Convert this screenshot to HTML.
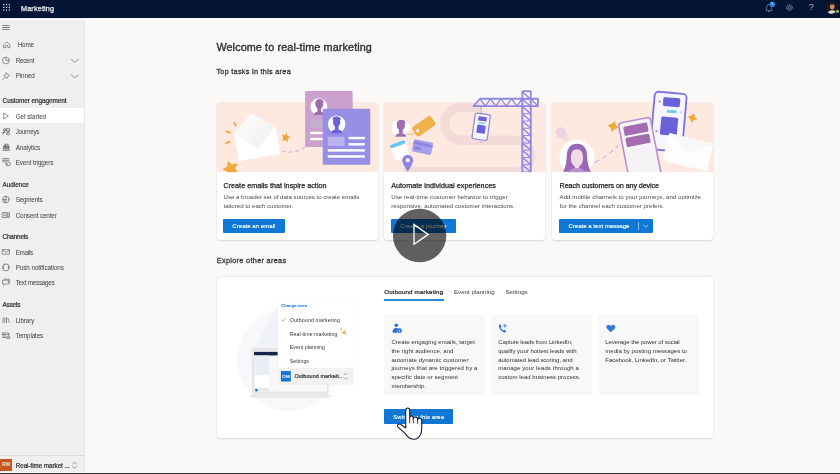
<!DOCTYPE html>
<html lang="en"><head><meta charset="utf-8"><title>Marketing</title>
<style>
html,body{margin:0;padding:0;}
body{width:840px;height:474px;overflow:hidden;position:relative;background:#faf9f8;font-family:"Liberation Sans",sans-serif;}
.abs{position:absolute;}
.t{position:absolute;white-space:nowrap;display:block;}
#hdr{left:0;top:0;width:840px;height:18.2px;background:#031434;}
#side{left:0;top:18px;width:83.7px;height:454px;background:#efefef;border-right:1.2px solid #e6e6e6;}
#sel{left:0;top:107.9px;width:83.7px;height:15.2px;background:#fff;}
#foot{left:0;top:472.7px;width:840px;height:1.3px;background:#383838;}
#sfl{left:0;top:455.2px;width:84.2px;height:0.6px;background:#dddcdb;}
#rm{left:0;top:458.5px;width:12px;height:12.6px;background:#c2571f;}
.card{background:#fff;border-radius:3px;box-shadow:0 0.7px 2px rgba(0,0,0,.13),0 0 1.2px rgba(0,0,0,.12);}
.img{background:#fde9df;border-radius:3px 3px 0 0;}
.btn{background:#0f78d4;border-radius:0.9px;}
.sub{background:#f8f8f8;border-radius:2.8px;}
#blur{filter:blur(0.35px);}
</style></head>
<body>
<div id="blur">
<div class="abs" id="hdr"></div>
<div class="abs" id="side"></div>
<div class="abs" id="sel"></div>
<div class="abs" style="left:0;top:18.7px;width:840px;height:0.9px;background:rgba(255,255,255,.75);"></div>
<div class="abs" id="sfl"></div>
<div class="abs" id="rm"></div>

<!-- task cards -->
<div class="abs card" style="left:216.6px;top:103.2px;width:161px;height:137px;"></div>
<div class="abs card" style="left:384.2px;top:103.2px;width:161px;height:137px;"></div>
<div class="abs card" style="left:551.9px;top:103.2px;width:161px;height:137px;"></div>
<div class="abs img" style="left:216.6px;top:103.2px;width:161px;height:69px;"></div>
<div class="abs img" style="left:384.2px;top:103.2px;width:161px;height:69px;"></div>
<div class="abs img" style="left:551.9px;top:103.2px;width:161px;height:69px;"></div>
<div class="abs btn" style="left:223.3px;top:218.9px;width:61.6px;height:14.2px;"></div>
<div class="abs btn" style="left:391px;top:218.9px;width:64.8px;height:14.2px;"></div>
<div class="abs btn" style="left:559.3px;top:218.9px;width:93.5px;height:14.2px;"></div>
<div class="abs" style="left:638.4px;top:222.4px;width:0.5px;height:7.2px;background:#7fb8ea;"></div>

<!-- explore card -->
<div class="abs card" style="left:216.6px;top:276.7px;width:496.3px;height:160.9px;"></div>
<div class="abs" style="left:384.2px;top:299.3px;width:59.6px;height:1.3px;background:#2b88d8;"></div>
<div class="abs sub" style="left:383.9px;top:315.2px;width:100.7px;height:80px;"></div>
<div class="abs sub" style="left:491.1px;top:315.2px;width:100.7px;height:80px;"></div>
<div class="abs sub" style="left:598.3px;top:315.2px;width:100.7px;height:80px;"></div>
<div class="abs btn" style="left:384px;top:409.3px;width:69.4px;height:14.4px;"></div>

<!--ART1-->
<svg class="abs" style="left:0;top:0;" width="840" height="474" viewBox="0 0 840 474">
<defs>
<clipPath id="c1"><rect x="216.6" y="80" width="161" height="92.2"/></clipPath>
<clipPath id="c2"><rect x="384.2" y="80" width="170" height="92.2"/></clipPath>
<clipPath id="c2r"><rect x="20" y="90" width="800" height="341"/></clipPath>
<clipPath id="c3"><rect x="551.9" y="80" width="161" height="92.2"/></clipPath>
<linearGradient id="envg" x1="0" y1="0" x2="1" y2="1"><stop offset="0" stop-color="#ffffff"/><stop offset="1" stop-color="#eeeeee"/></linearGradient>
</defs>

<!-- CARD 1 art : zoom coords origin (215,85) scale 1/4.94 -->
<g clip-path="url(#c1)"><g transform="translate(215,85) scale(0.20243)">
  <!-- back pink card -->
  <rect x="445" y="30" width="235" height="276" rx="5" fill="#cba0cf"/>
  <circle cx="513" cy="108" r="42" fill="#fff"/>
  <g fill="#a06bb0"><ellipse cx="515" cy="96" rx="19" ry="22"/><rect x="506" y="110" width="18" height="24"/><path d="M489 148 q0-16 26-17 q26 1 26 17z"/><path d="M494 92 q4-26 30-22 q14 4 12 20 q-10-12-42 2z"/></g>
  <rect x="470" y="170" width="80" height="42" rx="3" fill="#c4b0cf"/>
  <rect x="470" y="231" width="80" height="12" fill="#fff"/>
  <rect x="470" y="261" width="80" height="12" fill="#fff"/>
  <!-- dashed connector -->
  <path d="M330 325 Q390 345 445 305" fill="none" stroke="#cdb9de" stroke-width="6" stroke-dasharray="20 14"/>
  <!-- front purple card -->
  <rect x="532" y="117" width="235" height="277" rx="5" fill="#978ee6"/>
  <circle cx="601" cy="194" r="43" fill="#fff"/>
  <g fill="#6c61dd"><ellipse cx="601" cy="183" rx="18" ry="22"/><rect x="592" y="198" width="18" height="24"/><path d="M574 238 q0-17 27-18 q27 1 27 18z"/><path d="M581 172 q0-18 12-14 q8-8 16 0 q12-2 12 14z"/></g>
  <rect x="557" y="256" width="83" height="45" rx="4" fill="#bab3ef"/>
  <rect x="660" y="256" width="80" height="12" fill="#fff"/>
  <rect x="660" y="287" width="80" height="12" fill="#fff"/>
  <rect x="557" y="317" width="183" height="12" fill="#fff"/>
  <rect x="557" y="347" width="183" height="12" fill="#fff"/>
  <!-- envelope -->
  <path d="M95 240 L300 208 L320 340 L118 376 Z" fill="#ffffff"/>
  <path d="M95 240 L180 140 L300 208 L212 316 Z" fill="url(#envg)"/>
  <path d="M95 240 L212 316 L300 208 L320 340 L118 376 Z" fill="#ffffff"/>
  <!-- stars -->
  <path d="M350 236 l7 14 16 3 -12 11 3 16 -14-8 -14 8 3-16 -12-11 16-3z" fill="#f2a93b" transform="rotate(12 350 258)"/>
  <path d="M72 372 l13 25 28 4 -20 20 5 28 -26-14 -26 14 5-28 -20-20 28-4z" fill="#f2a93b" transform="rotate(-22 72 408) translate(4,2)"/>
  <!-- ticks -->
  <path d="M56 229 l18 6 M95 186 l7 16 M55 287 l17-7" stroke="#f2a93b" stroke-width="9" stroke-linecap="round" fill="none"/>
</g></g>

<!-- CARD 2 art : origin (380,85) -->
<g clip-path="url(#c2)"><g transform="translate(380,85) scale(0.20243)">
  <!-- road -->
  <path d="M500 110 H402 A81 81 0 0 0 402 272 H667 A78 78 0 0 1 667 428 H115" fill="none" stroke="#f3dbd8" stroke-width="46" clip-path="url(#c2r)"/>
  <!-- c2 person -->
  <circle cx="103" cy="213" r="45" fill="#fff"/>
  <g fill="#a06bb0"><ellipse cx="103" cy="201" rx="20" ry="23"/><rect x="94" y="216" width="18" height="24"/><path d="M76 256 q0-17 27-18 q27 1 27 18z"/><path d="M82 196 q2-28 30-24 q16 4 12 22 q-10-12-42 2z"/></g>
  <!-- tag -->
  <g transform="rotate(-35 215 203)"><rect x="160" y="176" width="112" height="56" rx="12" fill="#f0b04a"/><circle cx="178" cy="204" r="9" fill="#fde9df"/></g>
  <path d="M130 238 q20 14 52-4" fill="none" stroke="#f0b04a" stroke-width="4"/>
  <!-- calendar -->
  <g transform="rotate(-20 98 322)"><rect x="60" y="282" width="76" height="82" rx="6" fill="#fff"/><rect x="60" y="282" width="76" height="18" rx="6" fill="#6cc5ea"/></g>
  <!-- credit card -->
  <g transform="rotate(12 210 308)"><rect x="162" y="276" width="96" height="62" rx="6" fill="#a79dec"/><rect x="162" y="288" width="96" height="12" fill="#8c82e0"/><rect x="172" y="310" width="30" height="14" fill="#8c82e0"/></g>
  <!-- pin -->
  <path d="M137 345 a27 27 0 0 1 27 27 q0 18-27 56 q-27-38-27-56 a27 27 0 0 1 27-27z" fill="#8f86e0"/><circle cx="137" cy="372" r="10" fill="#fff"/>
  <!-- crane tower -->
  <g stroke="#9088e2" fill="none">
   <path d="M703 30 V432 M745 30 V432" stroke-width="9"/>
   <path d="M703 30 H745" stroke-width="9"/>
   <path d="M703 34 L745 70 M703 70 L745 106 M703 106 L745 142 M703 142 L745 178 M703 178 L745 214 M703 214 L745 250 M703 250 L745 286 M703 286 L745 322 M703 322 L745 358 M703 358 L745 394 M703 394 L745 430" stroke-width="7"/>
   <path d="M703 70 H745 M703 106 H745 M703 142 H745 M703 178 H745 M703 214 H745 M703 250 H745 M703 286 H745 M703 322 H745 M703 358 H745 M703 394 H745 M703 430 H745" stroke-width="5"/>
   <!-- jib -->
   <path d="M462 104 H780 V68 H494 Z" stroke-width="9" stroke-linejoin="round"/>
   <path d="M494 68 L520 104 L546 68 L572 104 L598 68 L624 104 L650 68 L676 104 L703 68 M745 68 L780 104" stroke-width="6.5"/>
   <path d="M500 104 V142" stroke-width="3"/>
  </g>
  <!-- hanging phone -->
  <g transform="rotate(8 500 205)"><rect x="462" y="142" width="76" height="128" rx="10" fill="#f6f5fd" stroke="#8f86e0" stroke-width="6"/>
   <rect x="480" y="156" width="42" height="22" rx="3" fill="#6c61dd"/><rect x="486" y="184" width="30" height="7" rx="3" fill="#6fd0e6"/><rect x="480" y="198" width="42" height="40" rx="3" fill="#6c61dd"/></g>
  <path d="M484 270 l16 22 16-18z" fill="#e6c6dc"/>
</g></g>

<!-- CARD 3 art : origin (548,85) -->
<g clip-path="url(#c3)"><g transform="translate(548,85) scale(0.20243)">
  <!-- fingerprint blobs -->
  <circle cx="64" cy="235" r="26" fill="#dcc3e2" opacity=".55"/><circle cx="86" cy="260" r="17" fill="#e9d3e4" opacity=".6"/>
  <!-- dashed -->
  <path d="M230 382 Q300 350 345 300" fill="none" stroke="#cdb9de" stroke-width="6" stroke-dasharray="26 16"/>
  <!-- blue phone (back) -->
  <g transform="translate(-8,0) rotate(5 603 180)"><rect x="524" y="38" width="158" height="286" rx="20" fill="#f7f6fd" stroke="#7b73e2" stroke-width="9"/>
   <rect x="568" y="62" width="84" height="44" rx="8" fill="#6a62d8"/>
   <rect x="590" y="122" width="50" height="15" rx="7" fill="#6fd0e6"/>
   <rect x="566" y="158" width="84" height="90" rx="8" fill="#6a62d8"/>
   <circle cx="552" cy="86" r="6" fill="#a7a0ea"/><circle cx="548" cy="232" r="6" fill="#a7a0ea"/><circle cx="660" cy="130" r="5" fill="#c9c4f3"/>
  </g>
  <!-- stars -->
  <path d="M328 176 q4 20 26 27 q-22 6-26 27 q-4-21-26-27 q22-7 26-27z" fill="#f2a93b" transform="translate(-5,2) rotate(15 328 203) translate(328,203) scale(1.18) translate(-328,-203)"/>
  <path d="M722 140 q3 17 22 23 q-19 5-22 23 q-3-18-22-23 q19-6 22-23z" fill="#f2a93b" transform="translate(-8,0) rotate(15 722 163) translate(722,163) scale(1.2) translate(-722,-163)"/>
  <!-- mauve phone (front) -->
  <g transform="rotate(-11 450 310)"><rect x="372" y="172" width="160" height="300" rx="16" fill="#f5f3f5" stroke="#bb91d1" stroke-width="8"/>
   <rect x="392" y="194" width="120" height="46" rx="6" fill="#a36bb0"/>
   <rect x="392" y="250" width="120" height="46" rx="6" fill="#a36bb0"/></g>
  <!-- envelope -->
  <g transform="rotate(14 690 335)"><rect x="578" y="262" width="226" height="140" rx="4" fill="#fdfdfd"/><path d="M578 262 L691 340 L804 262z" fill="#f8f8f8"/></g>
  <!-- woman -->
  <circle cx="143" cy="357" r="86" fill="#fff"/>
  <path d="M143 290 q-48 0-50 60 q-2 50-18 78 h136 q-16-28-18-78 q-2-60-50-60z" fill="#9a66b5"/>
  <path d="M143 318 q-30 0-30 40 q0 36 20 44 v24 h20 v-24 q20-8 20-44 q0-40-30-40z" fill="#f1dbe6"/>
  <path d="M95 440 q10-30 48-30 q38 0 48 30z" fill="#b98fd0"/>
</g></g>
</svg>
<svg class="abs" style="left:0;top:0;" width="840" height="474" viewBox="0 0 840 474">
<defs>
<filter id="ds" x="-20%" y="-20%" width="140%" height="140%"><feGaussianBlur in="SourceAlpha" stdDeviation="2.2"/><feOffset dy="1.2"/><feComponentTransfer><feFuncA type="linear" slope="0.3"/></feComponentTransfer><feMerge><feMergeNode/><feMergeNode in="SourceGraphic"/></feMerge></filter>
</defs>
<!-- header icons -->
<g fill="#cfd4e0">
 <rect x="3.1" y="3.9" width="1.3" height="1.3"/><rect x="5.9" y="3.9" width="1.3" height="1.3"/><rect x="8.7" y="3.9" width="1.3" height="1.3"/>
 <rect x="3.1" y="6.7" width="1.3" height="1.3"/><rect x="5.9" y="6.7" width="1.3" height="1.3"/><rect x="8.7" y="6.7" width="1.3" height="1.3"/>
 <rect x="3.1" y="9.5" width="1.3" height="1.3"/><rect x="5.9" y="9.5" width="1.3" height="1.3"/><rect x="8.7" y="9.5" width="1.3" height="1.3"/>
</g>
<!-- bell -->
<path d="M766.6 9.6 v-2.6 a2.4 2.4 0 0 1 4.8 0 v2.6 l0.7 0.8 h-6.2z M768.2 11 a0.9 0.9 0 0 0 1.8 0" fill="none" stroke="#9aa3b8" stroke-width="0.6"/>
<circle cx="772.3" cy="4.2" r="2.8" fill="#1a7fe0"/>
<!-- gear -->
<circle cx="789.5" cy="7.6" r="2.7" fill="none" stroke="#aab2c4" stroke-width="1" stroke-dasharray="1.1 0.6"/><circle cx="789.5" cy="7.6" r="1.1" fill="none" stroke="#aab2c4" stroke-width="0.6"/>
<!-- user photo -->
<clipPath id="avc"><circle cx="831.2" cy="7.7" r="6.2"/></clipPath>
<circle cx="831.2" cy="7.7" r="6.2" fill="#1b1b1e"/>
<g clip-path="url(#avc)"><ellipse cx="832.2" cy="6.6" rx="2.3" ry="3" fill="#c98d5f"/><path d="M827.500 14 q.5-3.800 4.600-3.800 q4.200 0 4.800 3.800z" fill="#d8d4cf"/><path d="M829.6 5 q2.400-3.200 5.400-.4 q-2.600-.6-5.400 .4z" fill="#2a1c14"/></g>
<circle cx="837.5" cy="11.4" r="1.6" fill="#7fba2c"/>

<!-- sidebar icons -->
<g fill="none" stroke="#555351" stroke-width="0.6" stroke-linecap="round" stroke-linejoin="round">
 <path d="M2.6 25.6 h6.8 M2.6 27.5 h6.8 M2.6 29.4 h6.8" stroke-width="0.7"/>
 <!-- home -->
 <path d="M3.8 44.6 L6.8 41.9 L9.8 44.6 V47.7 H7.9 V45.6 H5.7 V47.7 H3.8 Z"/>
 <!-- recent -->
 <circle cx="5.9" cy="60.5" r="3.4"/><path d="M5.9 58.4 V60.6 H7.6"/>
 <!-- pinned -->
 <path d="M6.4 72.9 L9.3 75.8 L8 76.2 L6.9 78.6 L3.9 75.6 L6.1 74.4 Z M5.3 77.1 L2.9 79.5"/>
 <!-- chevrons -->
 <path d="M71.4 59.4 L74.9 62.4 L78.4 59.4 M71.4 74.9 L74.9 77.9 L78.4 74.9" stroke-width="0.6"/>
 <!-- get started -->
 <path d="M4.1 113.3 L8.4 116.1 L4.1 118.9 Z"/>
 <!-- journeys -->
 <path d="M3 134.4 L4.6 130.6 M3.600 129.700 a1.100 1.100 0 1 0 2.200 0 a1.100 1.100 0 1 0 -2.200 0 M2.800 132.400 h2.400 M6.700 128.700 h2.800 v2.400 h-2.800z M8.100 131.100 v1.100 M6.800 133.600 a1.300 1.300 0 1 0 2.600 0 a1.300 1.300 0 1 0 -2.600 0" stroke-width="0.7"/>
 <!-- analytics -->
 <path d="M3.100 150.300 h6.600 M3.900 149.200 v-2.800 M5.400 149.200 v-4.600 M6.900 149.200 v-3.800 M8.400 149.200 v-2.400 M3.300 148 h6 M3.300 146.400 h6 M4.200 145 q2.200-2.600 4.600 0" stroke-width="0.75"/>
 <!-- event triggers -->
 <path d="M2.700 158.700 h6.300 M2.700 160.300 h6.300 M2.700 161.900 h2.200 M7 161.300 L5.500 163.700 h1.900 L6.300 165.700 M8 161.800 a2 2 0 1 1 -1 3.500" stroke-width="0.7"/>
 <!-- segments -->
 <circle cx="5.9" cy="199.5" r="3.3"/><path d="M5.9 196.2 V202.8 M5.9 199.5 H2.6 M5.9 199.5 L3.6 201.8"/>
 <!-- consent center -->
 <path d="M2.6 212.6 h6.8 v4.8 h-6.8z M3.8 214 h2 M3.8 215.6 h2 M7.4 213.8 a0.9 0.9 0 1 0 0.01 0 M6.4 216.6 q1-1.4 2 0"/>
 <!-- emails -->
 <path d="M2.6 249.6 h6.8 v4.6 h-6.8z M2.6 250.2 L6 252.4 L9.4 250.2"/>
 <!-- push -->
 <path d="M4.4 264.2 h3 a1 1 0 0 1 1 1 v4.4 a1 1 0 0 1 -1 1 h-3 a1 1 0 0 1 -1 -1 v-4.4 a1 1 0 0 1 1 -1z M2.7 266 q-0.8 1.4 0 2.8 M9.1 266 q0.8 1.4 0 2.8"/>
 <!-- text messages -->
 <path d="M3 280.2 h5.4 v3.8 h-3.6 L3.6 285.4 V284 H3z M4.2 279.2 h5.4 v3.8"/>
 <!-- library -->
 <path d="M3.1 317.8 v4.8 M4.8 317.8 v4.8 M6.500 317.8 v4.8 M7.9 318.2 L9.500 322.6"/>
 <!-- templates -->
 <path d="M2.8 333 h6 v2.6 M2.8 333 v4.6 h3.4 M2.8 334.6 h6 M4.8 334.6 v3 M7.2 336.6 h2.6 v1.8 h-2.6z"/>
 <!-- updown -->
 <path d="M72.6 463.9 L74.5 462 L76.4 463.9 M72.6 466.5 L74.5 468.4 L76.4 466.5" stroke-width="0.6"/>
</g>

<!-- split button chevron -->
<path d="M643.4 225 L645.7 227.2 L648 225" fill="none" stroke="#fff" stroke-width="0.65"/>

<!-- subcard icons -->
<g fill="#2a6fdb">
 <circle cx="396.2" cy="325.2" r="1.8"/><path d="M392.6 332.8 q-.2-4.800 3.600-4.800 q1.600 0 2.400 .6 q-2 1-1.600 4.200z"/><circle cx="399.500" cy="330.700" r="2.400"/><circle cx="399.500" cy="330.700" r=".8" fill="#f8f8f8"/>
 <path d="M500.200 324.200 q-1.500 .2-1.300 1.700 q.7 4.400 5.200 6.500 q1.500 .500 2.100-1 l-1.700-1.600 -1.200 .7 q-1.900-1.200-2.600-3.100 l1-1z"/><path d="M503.200 325.800 h3.600 M505 324 v3.600" stroke="#2a6fdb" stroke-width="0.9"/>
 <path fill="#2f7ddf" d="M610.8 332.2 l-4-3.800 q-1.300-1.500 0-3 q1.700-1.500 3.400 0 l.6 .6 .6-.6 q1.700-1.500 3.400 0 q1.300 1.500 0 3z"/>
</g>

<!-- explore illustration : origin (225,285) scale 1/3.647 -->
<g transform="translate(225,285) scale(0.2742)">
 <circle cx="232" cy="272" r="188" fill="#f8f8fb"/>
 <path d="M106 238 L192 72 V238 Z" fill="#e9eef8" opacity=".6"/>
 <!-- laptop -->
 <rect x="98" y="230" width="280" height="171" rx="5" fill="#e6e6e6"/>
 <rect x="106" y="244" width="266" height="145" fill="#f8f8f8"/>
 <rect x="106" y="244" width="266" height="13" fill="#14244a"/>
 <rect x="106" y="257" width="54" height="132" fill="#e9edf5"/>
 <rect x="108" y="329" width="52" height="45" fill="#ffffff"/>
 <rect x="110" y="379" width="9" height="9" fill="#0f78d4"/><rect x="122" y="381" width="36" height="4" fill="#e2e2e2"/>
 <path d="M90 400 H386 V404 q0 7-10 7 H100 q-10 0-10-7z" fill="#e9e9e9"/>
 <!-- dropdown -->
 <g filter="url(#ds)"><rect x="192" y="50" width="278" height="313" rx="5" fill="#fff"/></g>
 <path d="M192 302 H470 V358 q0 5-5 5 H197 q-5 0-5-5z" fill="#f2f2f2"/>
 <rect x="204" y="314" width="36" height="38" rx="2" fill="#0f78d4"/>
 <path d="M206 126 l5 6 l10-11" fill="none" stroke="#605e5c" stroke-width="1.8"/>
 <path d="M434 328 l6-6 l6 6 M434 338 l6 6 l6-6" fill="none" stroke="#605e5c" stroke-width="2"/>
 <path d="M435 162 q1.5 9 10 11 q-8.500 2-10 11 q-1.500-9-10-11 q8.500-2 10-11z M424 156 q.8 4 5 5 q-4.200 1-5 5 q-.8-4-5-5 q4.200-1 5-5z" fill="#f7b65e"/>
</g>
</svg>


<span class="t" style="left:21.00px;top:4.78px;font-size:7.2px;line-height:8.64px;font-weight:400;color:#eef0f6;letter-spacing:0.182px;-webkit-text-stroke:0.25px #eef0f6;">Marketing</span>
<span class="t" style="left:808.70px;top:1.88px;font-size:9.2px;line-height:11.04px;font-weight:400;color:#a9b1c4;letter-spacing:-0.525px;">?</span>
<span class="t" style="left:771.30px;top:2.26px;font-size:3.4px;line-height:4.08px;font-weight:400;color:#dbe9fb;letter-spacing:0.109px;">6</span>
<span class="t" style="left:17.70px;top:40.92px;font-size:6.3px;line-height:7.56px;font-weight:400;color:#42403f;letter-spacing:-0.124px;">Home</span>
<span class="t" style="left:15.70px;top:56.62px;font-size:6.3px;line-height:7.56px;font-weight:400;color:#42403f;letter-spacing:-0.276px;">Recent</span>
<span class="t" style="left:15.70px;top:72.12px;font-size:6.3px;line-height:7.56px;font-weight:400;color:#42403f;letter-spacing:-0.102px;">Pinned</span>
<span class="t" style="left:2.60px;top:96.96px;font-size:6.4px;line-height:7.68px;font-weight:400;color:#323130;letter-spacing:-0.053px;-webkit-text-stroke:0.22px #323130;">Customer engagement</span>
<span class="t" style="left:15.70px;top:112.52px;font-size:6.3px;line-height:7.56px;font-weight:400;color:#42403f;letter-spacing:-0.078px;">Get started</span>
<span class="t" style="left:15.70px;top:127.72px;font-size:6.3px;line-height:7.56px;font-weight:400;color:#42403f;letter-spacing:-0.258px;">Journeys</span>
<span class="t" style="left:15.70px;top:143.52px;font-size:6.3px;line-height:7.56px;font-weight:400;color:#42403f;letter-spacing:-0.100px;">Analytics</span>
<span class="t" style="left:15.70px;top:158.52px;font-size:6.3px;line-height:7.56px;font-weight:400;color:#42403f;letter-spacing:-0.097px;">Event triggers</span>
<span class="t" style="left:2.60px;top:180.76px;font-size:6.4px;line-height:7.68px;font-weight:400;color:#323130;letter-spacing:-0.057px;-webkit-text-stroke:0.22px #323130;">Audience</span>
<span class="t" style="left:15.70px;top:195.72px;font-size:6.3px;line-height:7.56px;font-weight:400;color:#42403f;letter-spacing:-0.195px;">Segments</span>
<span class="t" style="left:15.70px;top:211.52px;font-size:6.3px;line-height:7.56px;font-weight:400;color:#42403f;letter-spacing:-0.123px;">Consent center</span>
<span class="t" style="left:2.60px;top:233.46px;font-size:6.4px;line-height:7.68px;font-weight:400;color:#323130;letter-spacing:-0.202px;-webkit-text-stroke:0.22px #323130;">Channels</span>
<span class="t" style="left:15.70px;top:248.52px;font-size:6.3px;line-height:7.56px;font-weight:400;color:#42403f;letter-spacing:-0.284px;">Emails</span>
<span class="t" style="left:15.70px;top:263.52px;font-size:6.3px;line-height:7.56px;font-weight:400;color:#42403f;letter-spacing:-0.064px;">Push notifications</span>
<span class="t" style="left:15.70px;top:278.82px;font-size:6.3px;line-height:7.56px;font-weight:400;color:#42403f;letter-spacing:-0.246px;">Text messages</span>
<span class="t" style="left:2.60px;top:301.46px;font-size:6.4px;line-height:7.68px;font-weight:400;color:#323130;letter-spacing:-0.248px;-webkit-text-stroke:0.22px #323130;">Assets</span>
<span class="t" style="left:15.70px;top:316.52px;font-size:6.3px;line-height:7.56px;font-weight:400;color:#42403f;letter-spacing:-0.093px;">Library</span>
<span class="t" style="left:15.70px;top:331.52px;font-size:6.3px;line-height:7.56px;font-weight:400;color:#42403f;letter-spacing:-0.156px;">Templates</span>
<span class="t" style="left:2.30px;top:462.32px;font-size:4.8px;line-height:5.76px;font-weight:400;color:#f6e3d8;letter-spacing:0.116px;-webkit-text-stroke:0.17px #f6e3d8;">RM</span>
<span class="t" style="left:15.70px;top:462.12px;font-size:6.3px;line-height:7.56px;font-weight:400;color:#323130;letter-spacing:-0.052px;-webkit-text-stroke:0.22px #323130;">Real-time market ...</span>
<span class="t" style="left:216.40px;top:40.72px;font-size:10.8px;line-height:12.96px;font-weight:400;color:#323130;letter-spacing:0.113px;-webkit-text-stroke:0.38px #323130;">Welcome to real-time marketing</span>
<span class="t" style="left:216.40px;top:68.02px;font-size:7.3px;line-height:8.76px;font-weight:400;color:#323130;letter-spacing:0.275px;-webkit-text-stroke:0.26px #323130;">Top tasks in this area</span>
<span class="t" style="left:216.80px;top:256.62px;font-size:7.3px;line-height:8.76px;font-weight:400;color:#323130;letter-spacing:0.311px;-webkit-text-stroke:0.26px #323130;">Explore other areas</span>
<span class="t" style="left:223.50px;top:182.18px;font-size:7.2px;line-height:8.64px;font-weight:400;color:#201f1e;letter-spacing:0.010px;-webkit-text-stroke:0.25px #201f1e;">Create emails that inspire action</span>
<span class="t" style="left:223.50px;top:193.14px;font-size:6.1px;line-height:7.32px;font-weight:400;color:#4a4948;letter-spacing:-0.014px;">Use a broader set of data sources to create emails</span>
<span class="t" style="left:223.50px;top:202.44px;font-size:6.1px;line-height:7.32px;font-weight:400;color:#4a4948;letter-spacing:0.005px;">tailored to each customer.</span>
<span class="t" style="left:232.30px;top:222.34px;font-size:6.1px;line-height:7.32px;font-weight:400;color:#ffffff;letter-spacing:0.011px;-webkit-text-stroke:0.13px #ffffff;">Create an email</span>
<span class="t" style="left:391.20px;top:182.18px;font-size:7.2px;line-height:8.64px;font-weight:400;color:#201f1e;letter-spacing:0.042px;-webkit-text-stroke:0.25px #201f1e;">Automate individual experiences</span>
<span class="t" style="left:391.20px;top:193.14px;font-size:6.1px;line-height:7.32px;font-weight:400;color:#4a4948;letter-spacing:0.067px;">Use real-time customer behavior to trigger</span>
<span class="t" style="left:391.20px;top:202.44px;font-size:6.1px;line-height:7.32px;font-weight:400;color:#4a4948;letter-spacing:0.017px;">responsive, automated customer interactions.</span>
<span class="t" style="left:400.30px;top:222.34px;font-size:6.1px;line-height:7.32px;font-weight:400;color:#ffffff;letter-spacing:0.071px;-webkit-text-stroke:0.13px #ffffff;">Create a journey</span>
<span class="t" style="left:559.60px;top:182.18px;font-size:7.2px;line-height:8.64px;font-weight:400;color:#201f1e;letter-spacing:-0.099px;-webkit-text-stroke:0.25px #201f1e;">Reach customers on any device</span>
<span class="t" style="left:559.60px;top:193.14px;font-size:6.1px;line-height:7.32px;font-weight:400;color:#4a4948;letter-spacing:0.037px;">Add mobile channels to your journeys, and optimize</span>
<span class="t" style="left:559.60px;top:202.44px;font-size:6.1px;line-height:7.32px;font-weight:400;color:#4a4948;letter-spacing:0.010px;">for the channel each customer prefers.</span>
<span class="t" style="left:568.40px;top:222.34px;font-size:6.1px;line-height:7.32px;font-weight:400;color:#ffffff;letter-spacing:-0.010px;-webkit-text-stroke:0.13px #ffffff;">Create a text message</span>
<span class="t" style="left:384.20px;top:287.78px;font-size:6.2px;line-height:7.44px;font-weight:400;color:#201f1e;letter-spacing:0.168px;-webkit-text-stroke:0.22px #201f1e;">Outbound marketing</span>
<span class="t" style="left:454.00px;top:287.78px;font-size:6.2px;line-height:7.44px;font-weight:400;color:#3b3a39;letter-spacing:-0.018px;">Event planning</span>
<span class="t" style="left:505.40px;top:287.78px;font-size:6.2px;line-height:7.44px;font-weight:400;color:#3b3a39;letter-spacing:-0.007px;">Settings</span>
<span class="t" style="left:391.40px;top:339.30px;font-size:6.0px;line-height:7.20px;font-weight:400;color:#323130;letter-spacing:0.051px;">Create engaging emails, target</span>
<span class="t" style="left:391.40px;top:347.90px;font-size:6.0px;line-height:7.20px;font-weight:400;color:#323130;letter-spacing:0.046px;">the right audience, and</span>
<span class="t" style="left:391.40px;top:356.60px;font-size:6.0px;line-height:7.20px;font-weight:400;color:#323130;letter-spacing:0.069px;">automate dynamic customer</span>
<span class="t" style="left:391.40px;top:365.30px;font-size:6.0px;line-height:7.20px;font-weight:400;color:#323130;letter-spacing:0.095px;">journeys that are triggered by a</span>
<span class="t" style="left:391.40px;top:374.00px;font-size:6.0px;line-height:7.20px;font-weight:400;color:#323130;letter-spacing:0.065px;">specific date or segment</span>
<span class="t" style="left:391.40px;top:382.70px;font-size:6.0px;line-height:7.20px;font-weight:400;color:#323130;letter-spacing:-0.008px;">membership.</span>
<span class="t" style="left:498.20px;top:339.30px;font-size:6.0px;line-height:7.20px;font-weight:400;color:#323130;letter-spacing:-0.105px;">Capture leads from LinkedIn,</span>
<span class="t" style="left:498.20px;top:347.90px;font-size:6.0px;line-height:7.20px;font-weight:400;color:#323130;letter-spacing:-0.010px;">qualify your hottest leads with</span>
<span class="t" style="left:498.20px;top:356.60px;font-size:6.0px;line-height:7.20px;font-weight:400;color:#323130;letter-spacing:-0.053px;">automated lead scoring, and</span>
<span class="t" style="left:498.20px;top:365.30px;font-size:6.0px;line-height:7.20px;font-weight:400;color:#323130;letter-spacing:0.101px;">manage your leads through a</span>
<span class="t" style="left:498.20px;top:374.00px;font-size:6.0px;line-height:7.20px;font-weight:400;color:#323130;letter-spacing:0.009px;">custom lead business process.</span>
<span class="t" style="left:605.30px;top:339.30px;font-size:6.0px;line-height:7.20px;font-weight:400;color:#323130;letter-spacing:-0.090px;">Leverage the power of social</span>
<span class="t" style="left:605.30px;top:347.90px;font-size:6.0px;line-height:7.20px;font-weight:400;color:#323130;letter-spacing:0.023px;">media by posting messages to</span>
<span class="t" style="left:605.30px;top:356.60px;font-size:6.0px;line-height:7.20px;font-weight:400;color:#323130;letter-spacing:-0.020px;">Facebook, LinkedIn, or Twitter.</span>
<span class="t" style="left:393.20px;top:413.66px;font-size:5.9px;line-height:7.08px;font-weight:400;color:#ffffff;letter-spacing:0.150px;-webkit-text-stroke:0.13px #ffffff;">Switch to this area</span>
<span class="t" style="left:281.20px;top:303.84px;font-size:4.1px;line-height:4.92px;font-weight:400;color:#0f78d4;letter-spacing:0.212px;-webkit-text-stroke:0.14px #0f78d4;">Change area</span>
<span class="t" style="left:289.80px;top:316.68px;font-size:5.2px;line-height:6.24px;font-weight:400;color:#323130;letter-spacing:0.177px;">Outbound marketing</span>
<span class="t" style="left:289.80px;top:330.88px;font-size:5.2px;line-height:6.24px;font-weight:400;color:#323130;letter-spacing:0.067px;">Real-time marketing</span>
<span class="t" style="left:289.80px;top:344.48px;font-size:5.2px;line-height:6.24px;font-weight:400;color:#323130;letter-spacing:0.062px;">Event planning</span>
<span class="t" style="left:289.80px;top:358.08px;font-size:5.2px;line-height:6.24px;font-weight:400;color:#323130;letter-spacing:0.056px;">Settings</span>
<span class="t" style="left:282.30px;top:373.92px;font-size:4.3px;line-height:5.16px;font-weight:400;color:#ffffff;letter-spacing:0.239px;-webkit-text-stroke:0.15px #ffffff;">OM</span>
<span class="t" style="left:294.40px;top:373.16px;font-size:5.4px;line-height:6.48px;font-weight:400;color:#323130;letter-spacing:0.097px;-webkit-text-stroke:0.19px #323130;">Outbound marketi..</span>

<!--OV1-->
<svg class="abs" style="left:0;top:0;" width="840" height="474" viewBox="0 0 840 474">
 <circle cx="419.6" cy="235.5" r="26.7" fill="#000" fill-opacity="0.62"/>
 <path d="M414 224.6 V244.2 L428.2 234.4 Z" fill="none" stroke="#fff" stroke-width="1.3" stroke-linejoin="miter"/>
 <!-- hand cursor -->
 <g transform="translate(380,400) scale(0.09524)" stroke="#0c1830" stroke-width="11" stroke-linejoin="round" stroke-linecap="round">
 <path d="M270 108 Q270 85 291 85 Q312 85 312 108 V188 Q312 168 331 168 Q350 168 350 190 V196 Q352 178 372 178 Q395 178 395 202 V210 Q397 192 416 192 Q438 192 438 216 V300 Q438 370 395 400 Q360 425 315 402 Q290 388 255 342 L192 288 Q176 270 192 256 Q208 246 226 262 L270 294 Z" fill="#fff"/>
 <path d="M312 188 V240 M350 194 V240 M395 206 V244" fill="none" stroke-width="9"/>
 </g>
</svg>
<!--OV2-->
<div class="abs" id="foot"></div>
</div>
</body></html>
